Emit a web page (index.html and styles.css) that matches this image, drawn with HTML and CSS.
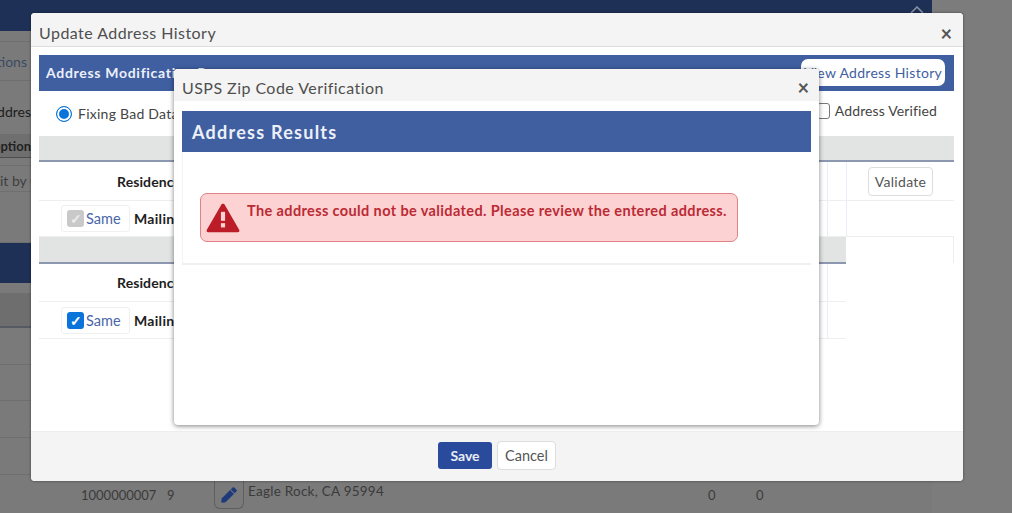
FILE: index.html
```html
<!DOCTYPE html>
<html lang="en">
<head>
<meta charset="utf-8">
<title>Update Address History</title>
<link rel="stylesheet" href="styles.css">
</head>
<body>
<div class="page">
  <div class="topbar">
    <svg class="chevron" viewBox="0 0 14 8" width="14" height="8"><path d="M1 7l6-6 6 6" fill="none" stroke="#8c93a3" stroke-width="1.500"/></svg>
  </div>
  <div class="side">
    <div class="side-row r-11"></div>
    <div class="side-row r-39 blue-text">tions</div>
    <div class="side-row r-54 dark-text">ddres</div>
    <div class="side-row r-23 option">option</div>
    <div class="side-row r-8"></div>
    <div class="side-row r-26 text">it by C</div>
    <div class="side-row r-51"></div>
    <div class="side-row r-40 navy"></div>
    <div class="side-row r-10 plain"></div>
    <div class="side-row r-35 shade"></div>
    <div class="side-row r-37"></div>
    <div class="side-row r-36"></div>
    <div class="side-row r-37"></div>
    <div class="side-row r-37"></div>
  </div>
  <div class="under-row">
    <span class="under-id">1000000007</span>
    <span class="under-num">9</span>
    <span class="under-edit">
      <svg viewBox="0 0 512 512" width="16" height="16"><path fill="#1f3a7a" d="M290 98l124 124-269 269-111 12c-15 2-27-11-26-26l12-111zM491 80l-59-59c-18-18-48-18-67 0l-55 55 124 124 57-55c18-19 18-49 0-65z"/></svg>
    </span>
    <span class="under-addr">Eagle Rock, CA 95994</span>
    <span class="under-zero zero-a">0</span>
    <span class="under-zero zero-b">0</span>
  </div>
</div>

<div class="modal outer">
  <header class="modal-head outer-head">
    <h2>Update Address History</h2>
    <span class="close">&#215;</span>
  </header>
  <div class="outer-body">
    <div class="banner">
      <span class="banner-title">Address Modification Reason</span>
      <button class="view-btn">View Address History</button>
    </div>
    <div class="options">
      <label class="radio-wrap"><span class="radio"></span>Fixing Bad Data</label>
      <label class="verified"><span class="box"></span>Address Verified</label>
    </div>
    <div class="section">
      <div class="grey-head"></div>
      <div class="row res-row lined-two">
        <span class="row-label">Residence</span>
        <button class="validate">Validate</button>
      </div>
      <div class="row mail-row lined-two">
        <span class="same"><span class="check off">&#10003;</span>Same</span>
        <span class="row-bold">Mailing</span>
      </div>
    </div>
    <div class="section section-b">
      <div class="grey-head"></div>
      <div class="row res-row lined-one">
        <span class="row-label">Residence</span>
      </div>
      <div class="row mail-row lined-one">
        <span class="same"><span class="check on">&#10003;</span>Same</span>
        <span class="row-bold">Mailing</span>
      </div>
    </div>
  </div>
  <footer class="outer-foot">
    <button class="save">Save</button>
    <button class="cancel">Cancel</button>
  </footer>
</div>

<div class="modal inner">
  <header class="modal-head inner-head">
    <h2>USPS Zip Code Verification</h2>
    <span class="close">&#215;</span>
  </header>
  <div class="inner-body">
    <div class="results">
      <div class="results-title">Address Results</div>
      <div class="results-content">
        <div class="alert">
          <svg class="alert-icon" viewBox="0 0 36 32" width="34" height="31">
            <path fill="#bb1c27" d="M18 1.500c1 0 1.600.5 2.100 1.400l15 26c.8 1.400 0 2.600-1.500 2.600H2.400c-1.500 0-2.300-1.200-1.500-2.600l15-26C16.400 2 17 1.500 18 1.500z"/>
            <rect x="15.800" y="10" width="4.400" height="9.500" fill="#fdd2d2"/>
            <rect x="15.800" y="22" width="4.400" height="4.500" fill="#fdd2d2"/>
          </svg>
          <span class="alert-text">The address could not be validated. Please review the entered address.</span>
        </div>
      </div>
    </div>
  </div>
</div>
</body>
</html>
```

FILE: styles.css
```css
* { box-sizing: border-box; }
html, body { margin: 0; padding: 0; }
body {
  width: 1012px;
  height: 513px;
  overflow: hidden;
  background: #7c7c7c;
  font-family: Lato, "Open Sans", sans-serif;
  color: #4d4d4d;
  position: relative;
}
button { font-family: inherit; }

/* dimmed page behind the dialogs */
.page { width: 932px; height: 513px; background: #7a7a7a; position: relative; }
.topbar { height: 31px; background: #1f3057; display: flex; justify-content: flex-end; padding: 6px 8px 0 0; align-items: flex-start; }
.side { width: 31px; display: flex; flex-direction: column; overflow: hidden; }
.side-row { flex: none; border-bottom: 1px solid #6f6f6f; font-size: 14px; color: #3f3f3f; display: flex; align-items: center; justify-content: flex-end; white-space: nowrap; overflow: hidden; }
.r-8 { height: 8px; }
.r-10 { height: 10px; }
.r-11 { height: 11px; }
.r-23 { height: 23px; }
.r-26 { height: 26px; }
.r-35 { height: 35px; }
.r-36 { height: 36px; }
.r-37 { height: 37px; }
.r-39 { height: 39px; }
.r-40 { height: 40px; }
.r-51 { height: 51px; }
.r-54 { height: 54px; padding-top: 8px; }
.blue-text { color: #3a4a63; padding-right: 4px; }
.text { color: #3f3f3f; justify-content: flex-start; padding-top: 4px; }
.dark-text { color: #1d1d1d; }
.option { font-weight: 700; font-size: 13px; color: #222; background: #6f6f6f; border-bottom: 1px solid #4d4d4d; }
.navy { background: #1f3057; border: 0; }
.plain { border: 0; }
.shade { background: #6d6e6d; border-bottom: 2px solid #565a62; }

.under-row { position: absolute; left: 0; top: 481px; width: 932px; height: 32px; font-size: 13px; color: #3a3a3a; }
.under-id { position: absolute; left: 81px; top: 6px; }
.under-num { position: absolute; left: 167px; top: 6px; }
.under-edit { position: absolute; left: 214px; top: 0; width: 30px; height: 28px; border: 1px solid #5e5e5e; border-top: 0; border-radius: 0 0 6px 6px; display: flex; align-items: center; justify-content: center; }
.under-addr { position: absolute; left: 248px; top: 2px; font-size: 13.500px; letter-spacing: .25px; }
.zero-a { position: absolute; left: 708px; top: 6px; }
.zero-b { position: absolute; left: 756px; top: 6px; }

/* dialogs */
.modal { position: absolute; background: #fff; border-radius: 4px; display: flex; flex-direction: column; }
.outer { left: 31px; top: 13px; width: 932px; height: 468px; box-shadow: 0 0 3px rgba(0,0,0,.45); }
.inner { left: 174px; top: 69px; width: 645px; height: 356px; box-shadow: 0 1px 5px rgba(0,0,0,.5); }
.modal-head { background: #f4f4f4; display: flex; align-items: center; justify-content: space-between; flex: none; border-radius: 4px 4px 0 0; }
.modal-head h2 { margin: 0; font-weight: 400; font-size: 16px; color: #4f4f4f; letter-spacing: .45px; }
.outer-head { height: 34px; padding: 6px 11px 0 8px; border-bottom: 1px solid #dedede; }
.inner-head { height: 32px; padding: 4px 10px 0 8px; }
.close { font-size: 20px; line-height: 1; color: #555; font-weight: 700; }

.outer-body { flex: 1; padding: 8px 9px 0 8px; min-height: 0; }
.banner { height: 36px; background: #3f5fa1; display: flex; align-items: center; justify-content: space-between; padding: 0 9px 2px 7px; }
.banner-title { color: #edf0f7; font-weight: 700; font-size: 14px; letter-spacing: .7px; white-space: nowrap; }
.view-btn { width: 144px; height: 27px; border: 0; border-radius: 7px; background: #fff; color: #3f5fa1; font-size: 14px; padding: 0; letter-spacing: .3px; }
.options { height: 45px; display: flex; align-items: center; justify-content: space-between; padding: 0 17px 0 17px; font-size: 14px; color: #444; letter-spacing: .25px; }
.radio-wrap, .verified { display: flex; align-items: center; }
.verified { margin-bottom: 6px; letter-spacing: .13px; }
.radio { width: 16px; height: 16px; border-radius: 50%; border: 1px solid #0a74da; background: #0a74da; box-shadow: inset 0 0 0 2px #fff; margin-right: 6px; }
.box { width: 13px; height: 16px; border: 1px solid #777; border-radius: 3px; margin-right: 5px; background: #fff; }

.grey-head { height: 26px; background: #e2e4e3; border-bottom: 2px solid #8c97b0; }
.row { position: relative; display: flex; align-items: center; border-bottom: 1px solid #eee; }
.lined-two {
  background:
    linear-gradient(#e8eef5, #e8eef5) 788px 0 / 1px 100% no-repeat,
    linear-gradient(#e8eef5, #e8eef5) 807px 0 / 1px 100% no-repeat;
}
.lined-one {
  background: linear-gradient(#e8eef5, #e8eef5) 788px 0 / 1px 100% no-repeat;
}
.res-row { height: 39px; padding-left: 78px; }
.mail-row { height: 36px; padding-left: 22px; }
.row-label { font-weight: 700; font-size: 14px; color: #1e1e1e; white-space: nowrap; letter-spacing: .1px; }
.row-bold { font-weight: 700; font-size: 14px; color: #1e1e1e; margin-left: 4px; white-space: nowrap; letter-spacing: .3px; }
.validate { position: absolute; right: 21px; top: 5px; width: 65px; height: 29px; background: #fff; border: 1px solid #ddd; border-radius: 4px; font-size: 14px; color: #555; padding: 0; letter-spacing: .3px; }
.same { width: 69px; height: 27px; display: flex; align-items: center; border: 1px solid #f0f0f0; border-radius: 3px; padding-left: 5px; font-size: 14.500px; color: #4a66a8; }
.check { width: 17px; height: 17px; border-radius: 3px; margin-right: 2px; display: flex; align-items: center; justify-content: center; font-size: 14px; font-weight: 700; color: #fff; }
.check.off { background: #c9c9c9; color: #ececec; }
.check.on { background: #0a74da; }

.section-b { background: linear-gradient(#eee, #eee) 100% 0 / 1px 26px no-repeat; }
.section-b .grey-head { width: 807px; height: 27px; }
.section-b .row { width: 807px; }
.section-b .res-row { height: 38px; }
.section-b .mail-row { height: 37px; }

.outer-foot { flex: none; height: 50px; background: #f4f4f4; display: flex; align-items: center; justify-content: center; gap: 5px; border-top: 1px solid #eee; border-radius: 0 0 4px 4px; padding-bottom: 2px; }
.save { width: 54px; height: 27px; background: #2a4b9b; color: #e9edf6; border: 0; border-radius: 3px; font-weight: 700; font-size: 14px; padding: 0; }
.cancel { width: 59px; height: 29px; background: #fff; color: #555; border: 1px solid #ddd; border-radius: 4px; font-size: 14.500px; padding: 0; }

.inner-body { flex: 1; padding: 10px 8px 0; }
.results { border-left: 1px solid #f3f3f3; border-bottom: 2px solid #f0f0f0; }
.results-title { height: 41px; margin-left: -1px; background: #3f5fa1; color: #edf0f7; font-weight: 700; font-size: 18px; letter-spacing: 1.250px; display: flex; align-items: center; padding-left: 10px; }
.results-content { padding: 41px 72px 21px 17px; }
.alert { height: 49px; width: 538px; background: #fdd2d2; border: 1px solid #e08286; border-radius: 7px; display: flex; align-items: flex-start; padding: 8px 0 0 5px; }
.alert-icon { flex: none; margin-right: 7px; }
.alert-text { color: #bb2a35; font-weight: 700; font-size: 14.500px; letter-spacing: .38px; white-space: nowrap; }
```
